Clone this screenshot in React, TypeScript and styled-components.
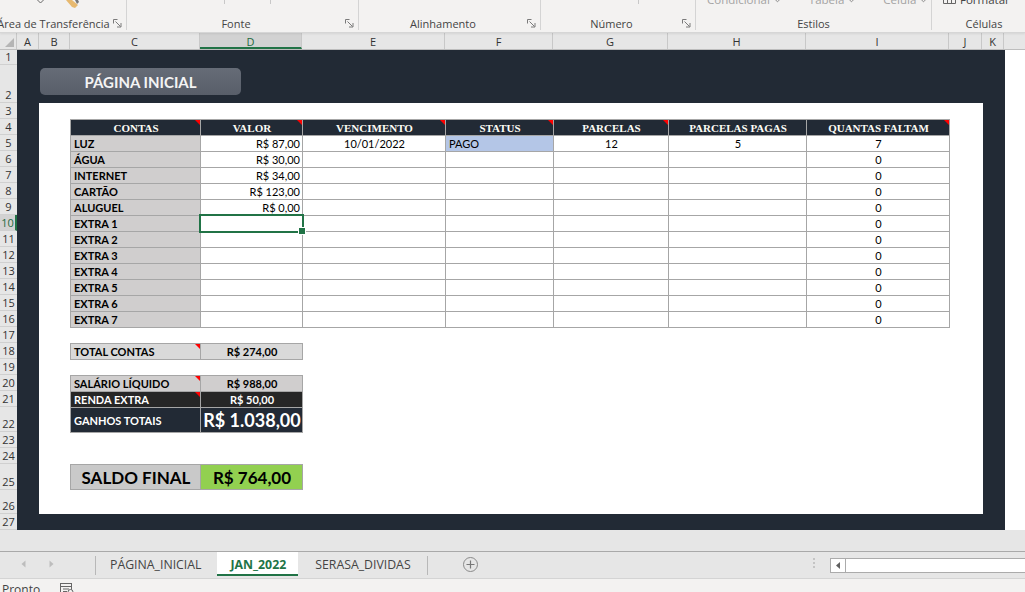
import React from 'react';
import styled, { createGlobalStyle, css } from 'styled-components';

const GlobalStyle = createGlobalStyle`
  html, body { margin: 0; padding: 0; background: #f3f2f1; }
  body { width: 1025px; height: 592px; overflow: hidden; font-family: "Open Sans", "Noto Sans", sans-serif; }
  * { box-sizing: border-box; }
`;

const Page = styled.div`
  width: 1025px;
  height: 592px;
  display: flex;
  flex-direction: column;
  overflow: hidden;
  background: #f3f2f1;
`;

/* ---------- Ribbon ---------- */
const Ribbon = styled.div`
  height: 33px;
  flex: none;
  display: flex;
  background: #f3f2f1;
  border-bottom: 1px solid #d6d6d6;
  box-shadow: 0 1px 2px rgba(0, 0, 0, 0.08);
  overflow: hidden;
  position: relative;
  z-index: 1;
`;

const RibbonGroup = styled.div<{ $w: number; $last?: boolean }>`
  width: ${p => p.$w}px;
  flex: none;
  height: 30px;
  display: flex;
  flex-direction: column;
  border-right: ${p => (p.$last ? 'none' : '1px solid #d4d4d4')};
`;

const TopRow = styled.div<{ $pad: number; $gap?: number }>`
  height: 17px;
  display: flex;
  align-items: flex-start;
  padding-left: ${p => p.$pad}px;
  gap: ${p => p.$gap ?? 0}px;
`;

const Tick = styled.div`
  width: 1px;
  height: 4px;
  background: #c8c8c8;
`;

const GhostText = styled.span<{ $dark?: boolean }>`
  display: flex;
  align-items: center;
  gap: 4px;
  margin-top: -7px;
  font-size: 11.5px;
  line-height: 14px;
  color: ${p => (p.$dark ? '#444' : '#a3a3a3')};
  white-space: nowrap;
`;

const LabelRow = styled.div`
  height: 13px;
  display: flex;
  align-items: center;
`;

const GroupLabel = styled.div`
  flex: 1;
  text-align: center;
  font-size: 11px;
  line-height: 13px;
  color: #444;
  white-space: nowrap;
`;

const Launcher = styled.svg`
  flex: none;
  margin-right: 4px;
`;

/* ---------- Column headers ---------- */
const ColHeaderBar = styled.div`
  height: 17px;
  flex: none;
  display: flex;
  background: #e6e6e6;
  border-bottom: 1px solid #bdbdbd;
`;

const Corner = styled.div`
  width: 17px;
  flex: none;
  display: flex;
  align-items: flex-end;
  justify-content: flex-end;
  padding: 0 2px 2px 0;
  border-right: 1px solid #c8c8c8;
`;

const ColHeader = styled.div<{ $w: number; $active?: boolean }>`
  width: ${p => p.$w}px;
  flex: none;
  display: flex;
  align-items: center;
  justify-content: center;
  border-right: 1px solid #c8c8c8;
  font-size: 11px;
  color: #333;
  ${p =>
    p.$active &&
    css`
      background: #d2d2d2;
      color: #1e6b41;
      border-bottom: 2px solid #217346;
      padding-top: 2px;
    `}
`;

const HeaderFiller = styled.div`
  flex: 1;
`;

/* ---------- Sheet body ---------- */
const SheetBody = styled.div`
  height: 480px;
  flex: none;
  display: flex;
`;

const RowHeaders = styled.div`
  width: 17px;
  flex: none;
  display: flex;
  flex-direction: column;
  background: #e6e6e6;
`;

const RowHeader = styled.div<{ $h: number; $active?: boolean }>`
  height: ${p => p.$h}px;
  flex: none;
  display: flex;
  align-items: flex-end;
  justify-content: center;
  border-bottom: 1px solid #d0d0d0;
  font-size: 11px;
  line-height: 14px;
  color: #333;
  overflow: hidden;
  ${p =>
    p.$active &&
    css`
      background: #d2d2d2;
      color: #1e6b41;
      border-right: 2px solid #217346;
    `}
`;

const DarkFrame = styled.div`
  width: 988px;
  flex: none;
  background: #222a35;
  display: flex;
  flex-direction: column;
  padding: 0 22px 16px 22px;
`;

const TitleRow = styled.div`
  height: 53px;
  flex: none;
  padding: 18px 0 0 1px;
`;

const TitleButton = styled.div`
  width: 201px;
  height: 27px;
  border-radius: 5px;
  background: linear-gradient(#666c77, #585e69);
  display: flex;
  align-items: center;
  justify-content: center;
  font-family: Lato, "Open Sans", sans-serif;
  font-weight: 700;
  font-size: 15px;
  color: #f4f4f4;
`;

const WhitePanel = styled.div`
  flex: 1;
  background: #ffffff;
  display: flex;
  flex-direction: column;
  align-items: flex-start;
  padding: 16px 0 0 31px;
`;

const RightBlank = styled.div`
  flex: 1;
  background: #ffffff;
`;

/* ---------- Cell tables ---------- */
const CellGrid = styled.div<{ $cols: string; $rows: string; $mt?: number }>`
  display: grid;
  grid-template-columns: ${p => p.$cols};
  grid-template-rows: ${p => p.$rows};
  gap: 1px;
  background: #a6a6a6;
  border: 1px solid #a6a6a6;
  margin-top: ${p => p.$mt ?? 0}px;
`;

type Tone = 'white' | 'head' | 'label' | 'blue' | 'total' | 'income' | 'dark' | 'navy' | 'saldo' | 'green';

const toneStyles: Record<Tone, string> = {
  white: 'background:#ffffff;color:#000;',
  head: 'background:#222a35;color:#fdfcf6;',
  label: 'background:#d0cece;color:#000;font-weight:700;',
  blue: 'background:#b4c6e7;color:#000;',
  total: 'background:#d9d9d9;color:#000;font-weight:700;',
  income: 'background:#d0cece;color:#000;font-weight:700;',
  dark: 'background:#262626;color:#ffffff;font-weight:700;',
  navy: 'background:#222a35;color:#ffffff;font-weight:700;',
  saldo: 'background:#c9c9c9;color:#000;font-weight:700;',
  green: 'background:#92d050;color:#000;font-weight:700;',
};

const Cell = styled.div<{
  $tone?: Tone;
  $align?: 'left' | 'center' | 'right';
  $note?: boolean;
  $selected?: boolean;
  $size?: number;
}>`
  position: relative;
  display: flex;
  align-items: center;
  justify-content: ${p => (p.$align === 'right' ? 'flex-end' : p.$align === 'center' ? 'center' : 'flex-start')};
  padding: 0 2px 0 3px;
  font-family: Lato, "Open Sans", sans-serif;
  font-size: ${p => p.$size ?? 11}px;
  line-height: 1;
  white-space: nowrap;
  ${p => toneStyles[p.$tone ?? 'white']}
  ${p =>
    p.$note &&
    css`
      &::before {
        content: '';
        position: absolute;
        top: 0;
        right: 0;
        border-top: 5px solid #ff0000;
        border-left: 5px solid transparent;
      }
    `}
  ${p =>
    p.$selected &&
    css`
      z-index: 2;
      outline: 2px solid #217346;
      &::after {
        content: '';
        position: absolute;
        right: -4px;
        bottom: -4px;
        width: 6px;
        height: 6px;
        background: #217346;
        border: 1px solid #ffffff;
      }
    `}
`;

const HeadCell = styled(Cell)`
  justify-content: center;
  font-family: "Liberation Serif", "DejaVu Serif", serif;
  font-weight: 700;
  font-size: 11px;
  padding-top: 1px;
`;

/* ---------- Bottom bars ---------- */
const GrayStrip = styled.div`
  height: 21px;
  flex: none;
  background: #e6e6e6;
`;

const TabBar = styled.div`
  height: 27px;
  flex: none;
  display: flex;
  align-items: flex-start;
  background: #e6e6e6;
  border-top: 1px solid #a9a9a9;
`;

const TabNav = styled.div`
  width: 95px;
  height: 24px;
  flex: none;
  display: flex;
  align-items: center;
  padding-left: 21px;
  gap: 23px;
`;

const TabSeparator = styled.div`
  width: 1px;
  height: 19px;
  margin-top: 4px;
  background: #b8b8b8;
  flex: none;
`;

const SheetTab = styled.div<{ $active?: boolean; $pl: number; $pr: number }>`
  height: 24px;
  flex: none;
  display: flex;
  align-items: center;
  padding: 0 ${p => p.$pr}px 0 ${p => p.$pl}px;
  font-size: 12.3px;
  color: #444;
  white-space: nowrap;
  ${p =>
    p.$active &&
    css`
      background: #ffffff;
      color: #217346;
      font-weight: 700;
      border-bottom: 2px solid #217346;
      padding-top: 2px;
    `}
`;

const AddSheet = styled.div`
  margin: 5px 0 0 35px;
  flex: none;
  width: 15px;
  height: 15px;
  border: 1px solid #8a8a8a;
  border-radius: 50%;
  display: flex;
  align-items: center;
  justify-content: center;
`;

const Spacer = styled.div`
  flex: 1;
`;

const Dots = styled.div`
  flex: none;
  margin: 6px 15px 0 0;
  display: flex;
  flex-direction: column;
  gap: 2px;
  span {
    width: 2px;
    height: 2px;
    background: #c4c4c4;
  }
`;

const ScrollBar = styled.div`
  width: 195px;
  height: 15px;
  flex: none;
  margin-top: 6px;
  display: flex;
  background: #ffffff;
  border: 1px solid #ababab;
  border-right: none;
`;

const ScrollButton = styled.div`
  width: 15px;
  flex: none;
  display: flex;
  align-items: center;
  justify-content: center;
  border-right: 1px solid #ababab;
  background: #ffffff;
`;

const StatusBar = styled.div`
  flex: 1;
  display: flex;
  align-items: flex-start;
  gap: 20px;
  padding: 3px 0 0 2px;
  background: #f3f2f1;
  border-top: 1px solid #d4d4d4;
  overflow: hidden;
`;

const StatusText = styled.span`
  font-size: 12px;
  line-height: 16px;
  color: #444;
`;

/* ---------- Data ---------- */
const columns = [
  { id: 'A', w: 22 },
  { id: 'B', w: 31 },
  { id: 'C', w: 130 },
  { id: 'D', w: 102, active: true },
  { id: 'E', w: 143 },
  { id: 'F', w: 108 },
  { id: 'G', w: 115 },
  { id: 'H', w: 138 },
  { id: 'I', w: 143 },
  { id: 'J', w: 33 },
  { id: 'K', w: 22 },
];

const rowHeights = [15, 38, ...Array(19).fill(16), 25, 16, 16, 26, 24, 16];

const headers = [
  { t: 'CONTAS', note: true },
  { t: 'VALOR', note: true },
  { t: 'VENCIMENTO', note: true },
  { t: 'STATUS', note: true },
  { t: 'PARCELAS', note: true },
  { t: 'PARCELAS PAGAS', note: false },
  { t: 'QUANTAS FALTAM', note: true },
];

type Bill = { name: string; value?: string; due?: string; status?: string; parcels?: string; paid?: string; left: string };

const bills: Bill[] = [
  { name: 'LUZ', value: 'R$ 87,00', due: '10/01/2022', status: 'PAGO', parcels: '12', paid: '5', left: '7' },
  { name: 'ÁGUA', value: 'R$ 30,00', left: '0' },
  { name: 'INTERNET', value: 'R$ 34,00', left: '0' },
  { name: 'CARTÃO', value: 'R$ 123,00', left: '0' },
  { name: 'ALUGUEL', value: 'R$ 0,00', left: '0' },
  ...[1, 2, 3, 4, 5, 6, 7].map(n => ({ name: `EXTRA ${n}`, left: '0' })),
];

const Chevron = ({ color = '#8a8a8a' }: { color?: string }) => (
  <svg width="7" height="5" viewBox="0 0 7 5">
    <path d="M0.5 0.8 L3.5 3.8 L6.5 0.8" fill="none" stroke={color} strokeWidth="1" />
  </svg>
);

const LauncherIcon = () => (
  <Launcher width="9" height="9" viewBox="0 0 9 9">
    <path d="M0.5 4.5 V0.5 H4.5" fill="none" stroke="#7a7a7a" strokeWidth="1" />
    <path d="M2.5 2.5 L7.5 7.5" fill="none" stroke="#7a7a7a" strokeWidth="1" />
    <path d="M8 4 V8 H4" fill="none" stroke="#7a7a7a" strokeWidth="1" />
  </Launcher>
);

export default function App() {
  return (
    <Page>
      <GlobalStyle />
      <Ribbon>
        <RibbonGroup $w={127}>
          <TopRow $pad={37} $gap={22}>
            <svg width="7" height="4" viewBox="0 0 7 4">
              <path d="M0.5 0 L3.5 3 L6.5 0" fill="none" stroke="#666" strokeWidth="1" />
            </svg>
            <svg width="16" height="8" viewBox="0 0 16 8">
              <polygon points="0,0 6,0 12,5 9,8 6,7" fill="#e7b96f" />
              <polygon points="9,0 12,0 13,2 11,4" fill="#777" />
            </svg>
          </TopRow>
          <LabelRow>
            <GroupLabel style={{ textIndent: '-6px' }}>Área de Transferência</GroupLabel>
            <LauncherIcon />
          </LabelRow>
        </RibbonGroup>
        <RibbonGroup $w={232}>
          <TopRow $pad={97} $gap={45}>
            <Tick />
            <Tick />
          </TopRow>
          <LabelRow>
            <GroupLabel>Fonte</GroupLabel>
            <LauncherIcon />
          </LabelRow>
        </RibbonGroup>
        <RibbonGroup $w={182}>
          <TopRow $pad={0} />
          <LabelRow>
            <GroupLabel>Alinhamento</GroupLabel>
            <LauncherIcon />
          </LabelRow>
        </RibbonGroup>
        <RibbonGroup $w={155}>
          <TopRow $pad={97}>
            <Tick />
          </TopRow>
          <LabelRow>
            <GroupLabel>Número</GroupLabel>
            <LauncherIcon />
          </LabelRow>
        </RibbonGroup>
        <RibbonGroup $w={236}>
          <TopRow $pad={11} $gap={28}>
            <GhostText>
              Condicional <Chevron />
            </GhostText>
            <GhostText>
              Tabela <Chevron />
            </GhostText>
            <GhostText>
              Célula <Chevron />
            </GhostText>
          </TopRow>
          <LabelRow>
            <GroupLabel>Estilos</GroupLabel>
          </LabelRow>
        </RibbonGroup>
        <RibbonGroup $w={104} $last>
          <TopRow $pad={11} $gap={4}>
            <svg width="13" height="4" viewBox="0 0 13 4">
              <path d="M0.5 0 V3.5 H12.5 V0 M4.5 0 V3.5 M8.5 0 V3.5" fill="none" stroke="#666" strokeWidth="1" />
            </svg>
            <GhostText $dark>Formatar</GhostText>
          </TopRow>
          <LabelRow>
            <GroupLabel>Células</GroupLabel>
          </LabelRow>
        </RibbonGroup>
      </Ribbon>

      <ColHeaderBar>
        <Corner>
          <svg width="9" height="9" viewBox="0 0 9 9">
            <polygon points="9,0 9,9 0,9" fill="#b5b5b5" />
          </svg>
        </Corner>
        {columns.map(c => (
          <ColHeader key={c.id} $w={c.w} $active={c.active}>
            {c.id}
          </ColHeader>
        ))}
        <HeaderFiller />
      </ColHeaderBar>

      <SheetBody>
        <RowHeaders>
          {rowHeights.map((h, i) => (
            <RowHeader key={i} $h={h} $active={i === 9}>
              {i + 1}
            </RowHeader>
          ))}
        </RowHeaders>
        <DarkFrame>
          <TitleRow>
            <TitleButton>PÁGINA INICIAL</TitleButton>
          </TitleRow>
          <WhitePanel>
            <CellGrid $cols="129px 101px 142px 107px 114px 137px 142px" $rows="repeat(13, 15px)">
              {headers.map(h => (
                <HeadCell key={h.t} $tone="head" $note={h.note}>
                  {h.t}
                </HeadCell>
              ))}
              {bills.map((b, i) => (
                <React.Fragment key={b.name}>
                  <Cell $tone="label">{b.name}</Cell>
                  <Cell $align="right" $selected={i === 5}>
                    {b.value}
                  </Cell>
                  <Cell $align="center">{b.due}</Cell>
                  <Cell $tone={b.status ? 'blue' : 'white'}>{b.status}</Cell>
                  <Cell $align="center">{b.parcels}</Cell>
                  <Cell $align="center">{b.paid}</Cell>
                  <Cell $align="center">{b.left}</Cell>
                </React.Fragment>
              ))}
            </CellGrid>

            <CellGrid $cols="129px 101px" $rows="15px" $mt={15}>
              <Cell $tone="total" $note>
                TOTAL CONTAS
              </Cell>
              <Cell $tone="total" $align="center">
                R$ 274,00
              </Cell>
            </CellGrid>

            <CellGrid $cols="129px 101px" $rows="15px 15px 24px" $mt={15}>
              <Cell $tone="income" $note>
                SALÁRIO LÍQUIDO
              </Cell>
              <Cell $tone="income" $align="center">
                R$ 988,00
              </Cell>
              <Cell $tone="dark" $note>
                RENDA EXTRA
              </Cell>
              <Cell $tone="dark" $align="center">
                R$ 50,00
              </Cell>
              <Cell $tone="navy">GANHOS TOTAIS</Cell>
              <Cell $tone="navy" $align="center" $size={18}>
                R$ 1.038,00
              </Cell>
            </CellGrid>

            <CellGrid $cols="129px 101px" $rows="24px" $mt={31}>
              <Cell $tone="saldo" $align="center" $size={17}>
                SALDO FINAL
              </Cell>
              <Cell $tone="green" $align="center" $size={17}>
                R$ 764,00
              </Cell>
            </CellGrid>
          </WhitePanel>
        </DarkFrame>
        <RightBlank />
      </SheetBody>

      <GrayStrip />

      <TabBar>
        <TabNav>
          <svg width="5" height="8" viewBox="0 0 5 8">
            <polygon points="4.5,0.5 0.5,4 4.5,7.5" fill="#bdbdbd" />
          </svg>
          <svg width="5" height="8" viewBox="0 0 5 8">
            <polygon points="0.5,0.5 4.5,4 0.5,7.5" fill="#bdbdbd" />
          </svg>
        </TabNav>
        <TabSeparator />
        <SheetTab $pl={14} $pr={16}>
          PÁGINA_INICIAL
        </SheetTab>
        <SheetTab $active $pl={13} $pr={12}>
          JAN_2022
        </SheetTab>
        <SheetTab $pl={17} $pr={16}>
          SERASA_DIVIDAS
        </SheetTab>
        <TabSeparator />
        <AddSheet>
          <svg width="9" height="9" viewBox="0 0 9 9">
            <path d="M4.5 0.5 V8.5 M0.5 4.5 H8.5" stroke="#777" strokeWidth="1.2" />
          </svg>
        </AddSheet>
        <Spacer />
        <Dots>
          <span />
          <span />
          <span />
        </Dots>
        <ScrollBar>
          <ScrollButton>
            <svg width="4" height="7" viewBox="0 0 4 7">
              <polygon points="4,0 0,3.5 4,7" fill="#606060" />
            </svg>
          </ScrollButton>
        </ScrollBar>
      </TabBar>

      <StatusBar>
        <StatusText>Pronto</StatusText>
        <svg width="14" height="12" viewBox="0 0 14 12" style={{ marginTop: 1 }}>
          <rect x="0.5" y="0.5" width="11" height="11" fill="none" stroke="#666" />
          <path d="M0.5 3.5 H11.5 M3 6 H9 M3 8.5 H7" stroke="#666" />
          <circle cx="10.5" cy="9" r="2.5" fill="#f3f2f1" stroke="#666" />
        </svg>
      </StatusBar>
    </Page>
  );
}
